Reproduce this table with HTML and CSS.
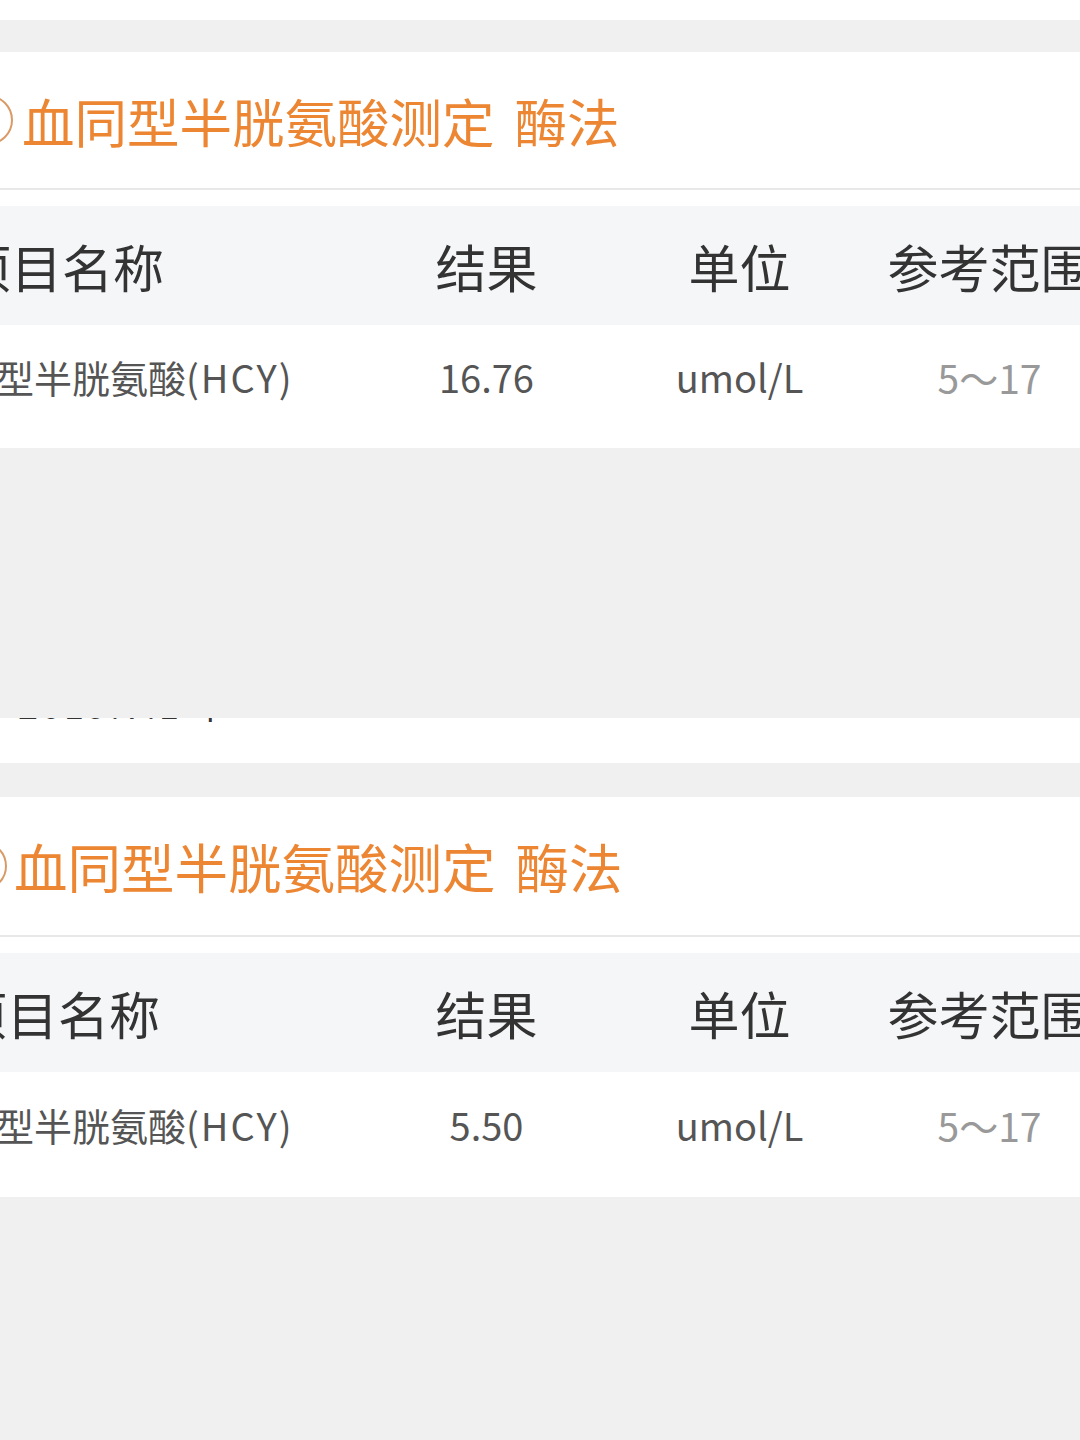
FILE: index.html
```html
<!DOCTYPE html>
<html lang="zh-CN">
<head>
  <meta charset="UTF-8">
  <meta name="viewport" content="width=device-width, initial-scale=1.0">
  <title>检验报告</title>
  <link rel="stylesheet" href="styles.css">
</head>
<body>

  <div class="top-strip"></div>

  <!-- first report -->
  <div class="panel first">
    <div class="panel-title">
      <span class="num-circle"></span>
      <span class="title-text">血同型半胱氨酸测定<span class="method">酶法</span></span>
    </div>
    <div class="table">
      <div class="row head">
        <span class="col-name">项目名称</span>
        <span class="col">结果</span>
        <span class="col">单位</span>
        <span class="col">参考范围</span>
      </div>
      <div class="row data">
        <span class="col-name">血同型半胱氨酸<span class="abbr">(HCY)</span></span>
        <span class="col value">16.76</span>
        <span class="col value">umol/L</span>
        <span class="col range">5～17</span>
      </div>
    </div>
  </div>

  <div class="spacer"></div>

  <!-- clipped bottom of another line -->
  <div class="cut-strip">
    <div class="cut-text">2019.7.1 下</div>
  </div>

  <!-- second report -->
  <div class="panel second">
    <div class="panel-title">
      <span class="num-circle"></span>
      <span class="title-text">血同型半胱氨酸测定<span class="method">酶法</span></span>
    </div>
    <div class="table">
      <div class="row head">
        <span class="col-name">项目名称</span>
        <span class="col">结果</span>
        <span class="col">单位</span>
        <span class="col">参考范围</span>
      </div>
      <div class="row data">
        <span class="col-name">血同型半胱氨酸<span class="abbr">(HCY)</span></span>
        <span class="col value">5.50</span>
        <span class="col value">umol/L</span>
        <span class="col range">5～17</span>
      </div>
    </div>
  </div>

</body>
</html>
```

FILE: styles.css
```css
body {
  margin: 0;
  padding: 0;
  background-color: #f0f0f0;
  font-family: "Noto Sans CJK SC", sans-serif;
  overflow: hidden;
  height: 1440px;
}

.top-strip {
  height: 20px;
  background: #ffffff;
  margin-bottom: 32px;
}

.panel {
  background: #ffffff;
  overflow: hidden;
}

/* Title row */
.panel-title {
  height: 136px;
  display: flex;
  align-items: center;
  border-bottom: 2px solid #e8e8e8;
  margin-left: -37px;
}

.second .panel-title {
  height: 138px;
  margin-left: -43px;
}

.num-circle {
  width: 46px;
  height: 46px;
  border: 2px solid #d99a66;
  border-radius: 50%;
  margin-right: 12px;
  flex-shrink: 0;
}

.second .num-circle {
  margin-right: 10px;
}

.title-text {
  font-size: 52.5px;
  color: #ec8632;
  white-space: nowrap;
  line-height: 1;
  margin-left: -3px;
}

.second .title-text {
  font-size: 53.5px;
}

.method {
  margin-left: 20px;
}

/* Table */
.table {
  padding-top: 16px;
}

.row {
  display: grid;
  grid-template-columns: 460px 253px 253px 247px;
  align-items: center;
  margin-left: -100px;
  white-space: nowrap;
}

.row.head {
  height: 119px;
  background: #f5f6f8;
  font-size: 51px;
  color: #333333;
}

.row.data {
  box-sizing: border-box;
  height: 123px;
  padding-bottom: 20px;
  background: #ffffff;
  font-size: 39px;
  color: #555555;
}

.second .row.data {
  height: 125px;
}

.row.head .col-name {
  padding-left: 60px;
}

.second .row.head .col-name {
  padding-left: 56px;
}

.row.data .col-name {
  padding-left: 20px;
  font-size: 38px;
}

.abbr {
  letter-spacing: 2px;
}

.col {
  text-align: center;
}

.col.value {
  font-size: 38px;
}

.range {
  color: #999999;
}

.spacer {
  height: 270px;
}

.cut-strip {
  height: 45px;
  background: #ffffff;
  overflow: hidden;
  margin-bottom: 34px;
}

.cut-text {
  margin-top: -34px;
  padding-left: 18px;
  font-size: 36px;
  line-height: 38px;
  letter-spacing: 3px;
  color: #333333;
}
```
